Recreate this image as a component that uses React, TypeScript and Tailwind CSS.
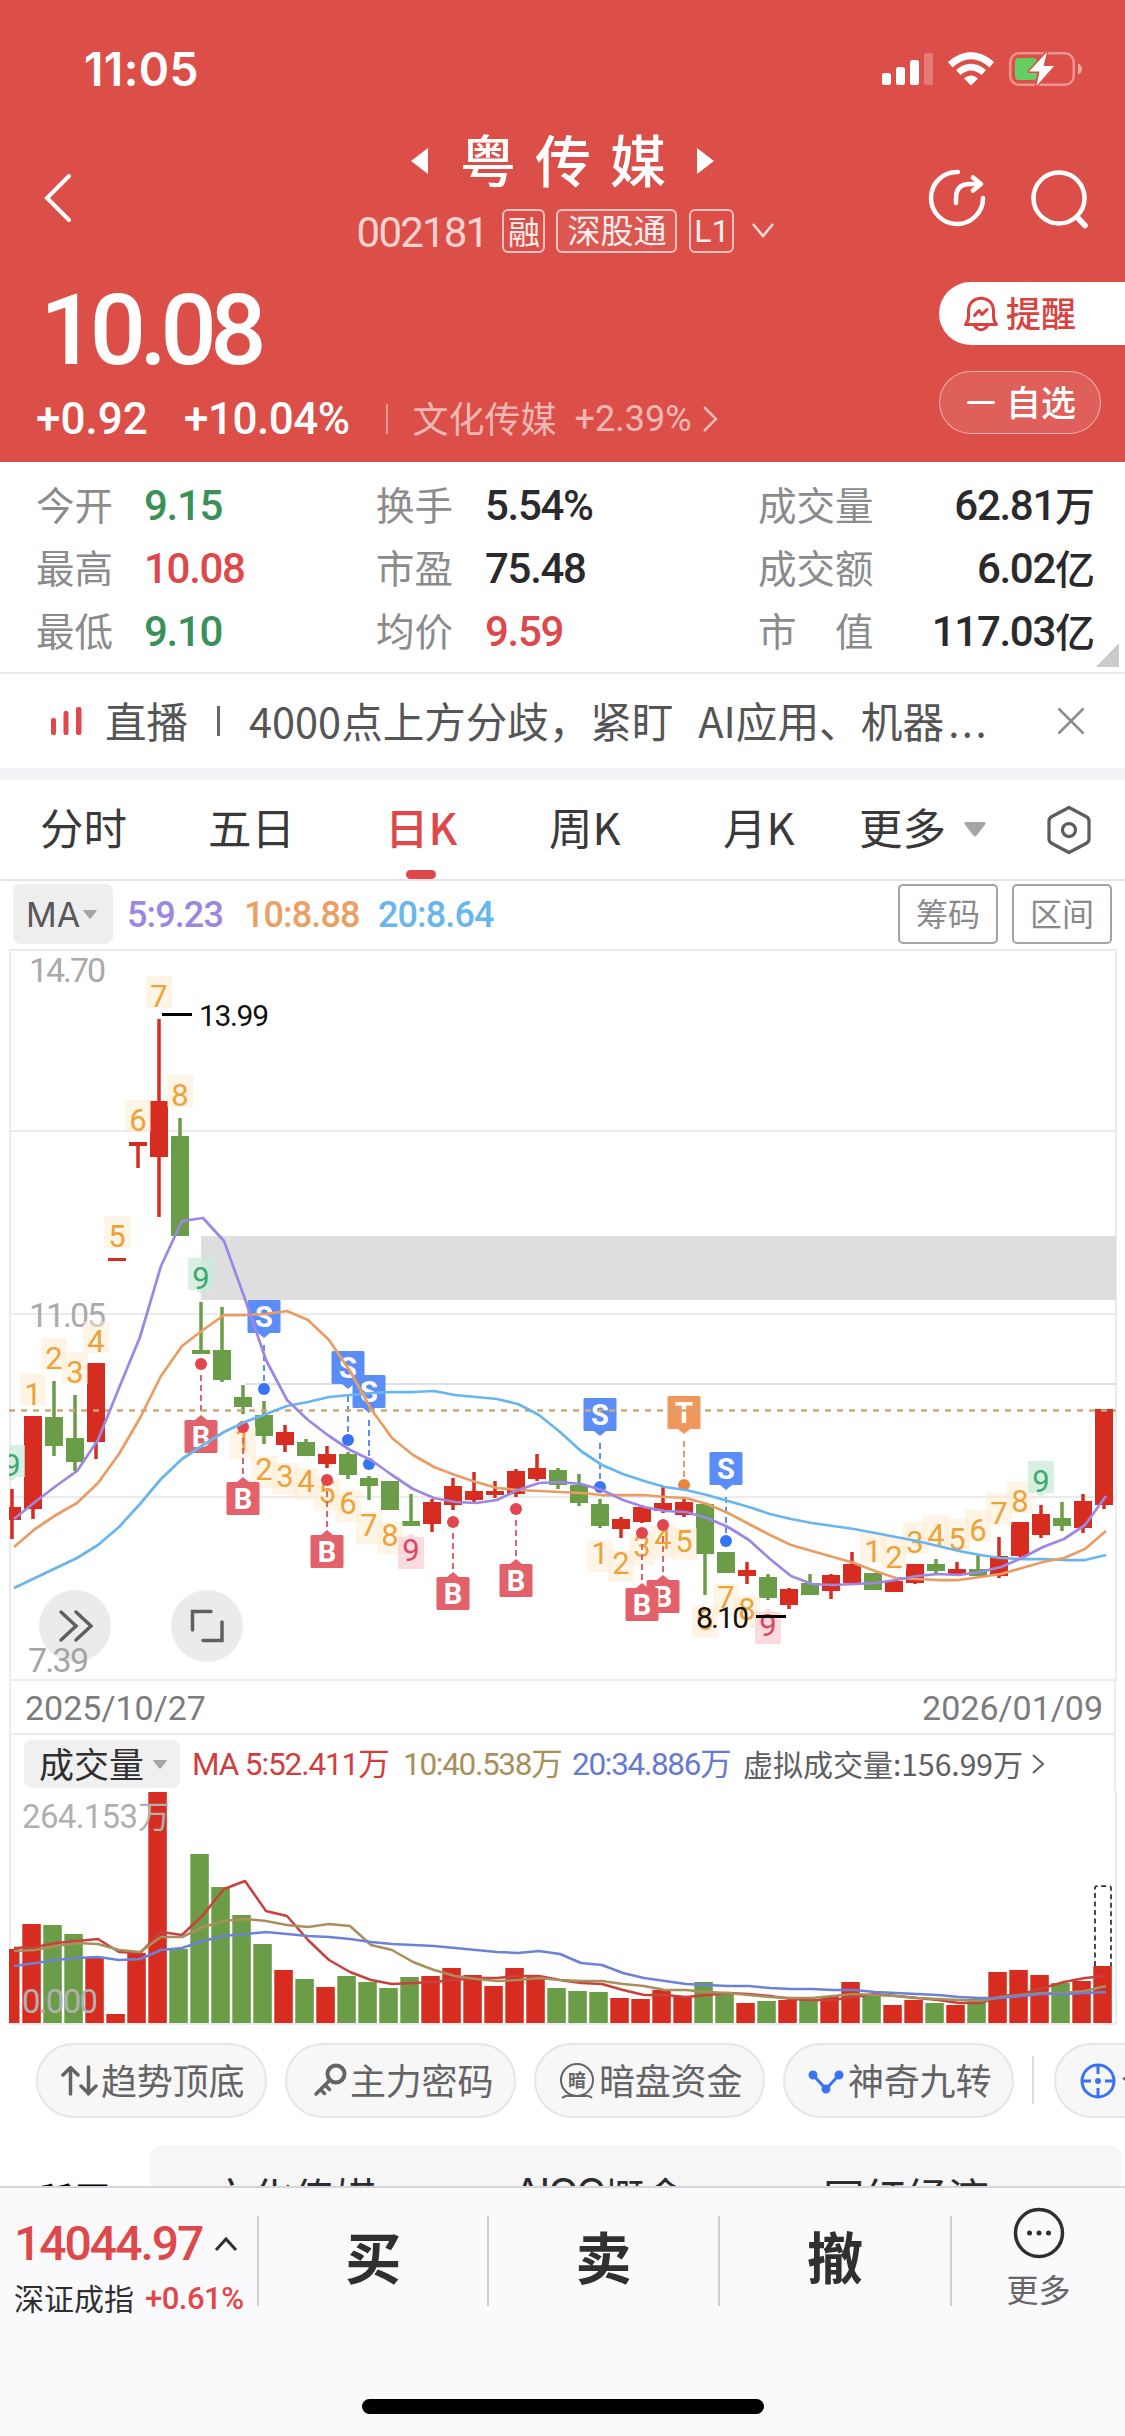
import type { ReactNode } from "react";

type Candle = [dir: "r" | "g", top: number, bottom: number, high: number, low: number];
type Turn = [x: number, baseline: number, n: number, tone?: "green" | "pink"];
type Mark = [kind: "B" | "S" | "T", x: number, boxTop: number, dotY: number];

const RED = "#d72d20";
const GREEN = "#6b9d48";
const STEP = 21;

const CANDLES: Candle[] = [
  ["r", 1507, 1520, 1489, 1539], ["r", 1416, 1509, 1416, 1519], ["g", 1417, 1446, 1381, 1456],
  ["g", 1438, 1462, 1395, 1471], ["r", 1363, 1442, 1363, 1459], ["r", 1258, 1261, 1258, 1261],
  ["r", 1142, 1146, 1142, 1168], ["r", 1101, 1157, 1019, 1217], ["g", 1136, 1236, 1118, 1236],
  ["g", 1350, 1354, 1302, 1354], ["g", 1350, 1380, 1307, 1382], ["g", 1397, 1407, 1385, 1414],
  ["g", 1415, 1436, 1401, 1444], ["r", 1432, 1445, 1425, 1452], ["g", 1442, 1456, 1439, 1456],
  ["r", 1454, 1464, 1446, 1468], ["g", 1454, 1475, 1452, 1479], ["g", 1478, 1486, 1476, 1500],
  ["g", 1481, 1510, 1481, 1510], ["g", 1521, 1526, 1494, 1526], ["r", 1502, 1524, 1499, 1532],
  ["r", 1486, 1505, 1478, 1510], ["r", 1491, 1500, 1472, 1502], ["r", 1491, 1495, 1481, 1498],
  ["r", 1471, 1494, 1469, 1497], ["r", 1468, 1479, 1454, 1481], ["g", 1470, 1485, 1468, 1489],
  ["g", 1485, 1503, 1474, 1506], ["g", 1504, 1526, 1499, 1528], ["r", 1519, 1529, 1517, 1538],
  ["r", 1507, 1522, 1505, 1523], ["r", 1503, 1511, 1487, 1513], ["r", 1502, 1515, 1499, 1517],
  ["g", 1504, 1554, 1504, 1595], ["g", 1552, 1573, 1552, 1573], ["r", 1570, 1576, 1562, 1584],
  ["g", 1577, 1598, 1574, 1600], ["r", 1589, 1605, 1588, 1609], ["g", 1583, 1595, 1574, 1595],
  ["r", 1575, 1591, 1574, 1599], ["r", 1564, 1583, 1552, 1583], ["g", 1573, 1590, 1573, 1590],
  ["r", 1581, 1592, 1581, 1592], ["r", 1564, 1583, 1564, 1584], ["g", 1564, 1571, 1559, 1574],
  ["r", 1569, 1575, 1562, 1575], ["g", 1569, 1576, 1554, 1576], ["r", 1556, 1576, 1537, 1578],
  ["r", 1522, 1556, 1522, 1557], ["r", 1514, 1535, 1505, 1538], ["g", 1518, 1526, 1502, 1531],
  ["r", 1501, 1528, 1494, 1533], ["r", 1409, 1505, 1409, 1509],
];

const MA5 = [
  1519, 1502, 1486, 1471, 1440, 1388, 1337, 1266, 1221, 1218, 1241, 1299, 1360, 1400, 1420, 1436, 1450, 1460,
  1475, 1489, 1498, 1502, 1503, 1500, 1490, 1483, 1482, 1484, 1490, 1500, 1507, 1511, 1512, 1518, 1527, 1540,
  1559, 1576, 1584, 1585, 1584, 1583, 1580, 1576, 1574, 1575, 1572, 1567, 1558, 1547, 1539, 1525, 1496,
];
const MA10 = [
  1547, 1529, 1515, 1503, 1483, 1454, 1418, 1376, 1346, 1330, 1315, 1315, 1314, 1311, 1320, 1340, 1371, 1409,
  1438, 1455, 1467, 1475, 1482, 1488, 1490, 1491, 1492, 1493, 1495, 1495, 1495, 1497, 1498, 1504, 1513, 1524,
  1535, 1545, 1551, 1557, 1563, 1571, 1578, 1579, 1580, 1580, 1577, 1574, 1568, 1562, 1558, 1549, 1531,
];
const MA20 = [
  1588, 1578, 1568, 1558, 1545, 1527, 1504, 1479, 1459, 1445, 1432, 1422, 1414, 1406, 1402, 1397, 1395, 1393,
  1392, 1392, 1391, 1395, 1397, 1399, 1404, 1415, 1432, 1451, 1465, 1474, 1481, 1487, 1490, 1495, 1501, 1507,
  1514, 1519, 1523, 1526, 1529, 1533, 1537, 1541, 1546, 1551, 1555, 1558, 1559, 1559, 1560, 1560, 1555,
];

const TURNS_ABOVE: Turn[] = [
  [12, 1476, 9, "green"], [33, 1405, 1], [54, 1369, 2], [75, 1383, 3], [96, 1352, 4], [117, 1247, 5],
  [138, 1131, 6], [159, 1007, 7], [180, 1106, 8], [201, 1289, 9, "green"],
  [873, 1562, 1], [894, 1568, 2], [915, 1553, 3], [936, 1546, 4], [957, 1550, 5], [978, 1541, 6],
  [999, 1524, 7], [1020, 1512, 8], [1041, 1492, 9, "green"],
];
const TURNS_BELOW: Turn[] = [
  [243, 1451, 1], [264, 1480, 2], [285, 1487, 3], [306, 1492, 4], [327, 1503, 5], [348, 1514, 6],
  [369, 1536, 7], [390, 1546, 8], [411, 1561, 9, "pink"],
  [600, 1564, 1], [621, 1574, 2], [642, 1557, 3], [663, 1549, 4], [684, 1552, 5], [705, 1630, 6],
  [726, 1608, 7], [747, 1620, 8], [768, 1636, 9, "pink"],
];

const MARKS: Mark[] = [
  ["B", 201, 1420, 1364], ["S", 264, 1300, 1389], ["B", 243, 1482, 1427], ["B", 327, 1535, 1480],
  ["S", 348, 1351, 1440], ["S", 369, 1375, 1464], ["B", 453, 1577, 1522], ["B", 516, 1564, 1509],
  ["S", 600, 1398, 1487], ["B", 663, 1580, 1525], ["B", 642, 1588, 1533], ["T", 684, 1396, 1485],
  ["S", 726, 1452, 1541],
];
const MARK_COLORS = {
  B: ["#e2616a", "#e2454d"],
  S: ["#5b8df9", "#3574f3"],
  T: ["#f0975c", "#ef8338"],
};

// heights are measured up from the zero line
const VOLUMES = [
  74, 99, 98, 89, 65, 9, 70, 231, 74, 169, 136, 108, 79, 53, 44, 36, 47, 41, 35, 46, 47, 55, 48, 37, 55, 46, 35,
  32, 31, 25, 24, 33, 27, 41, 29, 20, 22, 23, 24, 27, 41, 28, 18, 23, 20, 18, 24, 51, 53, 48, 40, 42, 57,
];
const VMA5 = [
  75, 76, 80, 82, 84, 71, 70, 91, 88, 108, 134, 142, 112, 107, 83, 63, 51, 43, 39, 40, 41, 43, 45, 45, 47, 47, 43,
  40, 39, 33, 28, 28, 26, 28, 30, 29, 27, 24, 23, 23, 26, 29, 27, 25, 23, 20, 20, 27, 29, 35, 41, 45, 47,
];
const VMA10 = [
  72, 73, 77, 80, 79, 73, 71, 86, 86, 96, 102, 104, 102, 98, 96, 99, 97, 78, 73, 61, 53, 47, 44, 42, 43, 45, 43,
  42, 42, 39, 37, 33, 33, 31, 30, 28, 26, 25, 25, 27, 29, 28, 27, 25, 24, 23, 22, 26, 28, 30, 30, 32, 37,
];
const VMA20 = [
  57, 60, 63, 65, 66, 63, 64, 73, 75, 82, 87, 89, 91, 89, 87, 86, 84, 81, 79, 78, 77, 75, 73, 71, 70, 72, 69,
  60, 58, 50, 45, 42, 39, 38, 37, 37, 35, 34, 34, 33, 33, 31, 30, 29, 28, 26, 25, 25, 27, 29, 29, 30, 31,
];

const linePoints = (ys: number[]) => ys.map((y, i) => `${14 + STEP * i},${y}`).join(" ");
const volPoints = (hs: number[]) => hs.map((h, i) => `${14 + STEP * i},${2023 - h}`).join(" ");

function TurnLabel({ item, below }: { item: Turn; below?: boolean }) {
  const [x, y, n, tone] = item;
  const top = below ? y - 24 : y - 31;
  const fill = tone === "green" ? "#c9ebd8" : tone === "pink" ? "#f9cfd3" : "#fdebcf";
  const color = tone === "green" ? "#3fa872" : tone === "pink" ? "#dc4660" : "#eda23a";
  return (
    <g>
      <rect x={x - 13} y={top} width="26" height="32" fill={fill} opacity={tone ? 0.75 : 0.5} />
      {tone && (
        <path
          d={below ? `M${x - 5} ${top}l5 -4l5 4z` : `M${x - 5} ${top + 32}l5 4l5 -4z`}
          fill={fill}
          opacity="0.75"
        />
      )}
      <text x={x} y={y} fill={color} fontSize="31" textAnchor="middle">{n}</text>
    </g>
  );
}

function TradeMark({ item }: { item: Mark }) {
  const [kind, x, top, dot] = item;
  const [fill, dotFill] = MARK_COLORS[kind];
  const up = kind === "B";
  return (
    <g>
      <line
        x1={x} x2={x}
        y1={up ? dot + 11 : top + 45}
        y2={up ? top - 5 : dot - 6}
        stroke={fill} strokeWidth="2" strokeDasharray="6 4"
      />
      <circle cx={x} cy={dot} r="6" fill={dotFill} />
      <rect x={x - 16.5} y={top} width="33" height="33" rx="1.5" fill={fill} />
      <path d={up ? `M${x - 6} ${top}l6 -5l6 5z` : `M${x - 6} ${top + 33}l6 5l6 -5z`} fill={fill} />
      <text x={x} y={top + 27} fill="#fff" fontSize="29" fontWeight="700" textAnchor="middle">{kind}</text>
    </g>
  );
}

function PriceChart() {
  return (
    <svg className="block font-['Roboto',sans-serif]" width="1125" height="732" viewBox="0 949 1125 732">
      <defs>
        <clipPath id="plot"><rect x="9" y="949" width="1107" height="732" /></clipPath>
      </defs>
      <g stroke="#ebebee" strokeWidth="2" fill="none">
        <path d="M10 1681V950H1116V1681M10 1131H1116M10 1314H1116M10 1497H1116M10 1680H1116" />
        <path d="M245 1384H1116" stroke="#e0e0e2" />
      </g>
      <rect x="201" y="1236" width="915" height="64" fill="#dedede" />
      <g fill="#aaa" fontSize="34">
        <text x="29" y="982" textLength="77">14.70</text>
        <text x="29" y="1327" textLength="77">11.05</text>
      </g>
      <circle cx="75" cy="1626" r="36" fill="#ebebeb" />
      <circle cx="207" cy="1626" r="36" fill="#ebebeb" />
      <path
        d="M61 1612L76 1626L61 1640M76 1612L91 1626L76 1640M192.500 1630V1611.500H211M222 1622V1640.500H203"
        fill="none" stroke="#606060" strokeWidth="3.500" strokeLinecap="round"
      />
      <text x="28" y="1672" fill="#a4a4a4" fontSize="34" textLength="61">7.39</text>

      <g clipPath="url(#plot)">
        {CANDLES.map(([dir, top, bottom, high, low], i) => {
          const x = 12 + STEP * i;
          return (
            <g key={i} fill={dir === "r" ? RED : GREEN}>
              <rect x={x - 1.75} y={high} width="3.5" height={low - high} />
              <rect x={x - 9} y={top} width="18" height={bottom - top} />
            </g>
          );
        })}
        {TURNS_ABOVE.map((t) => <TurnLabel key={t[0]} item={t} />)}
        {TURNS_BELOW.map((t) => <TurnLabel key={t[0]} item={t} below />)}
      </g>
      {MARKS.map((m) => <TradeMark key={m[1]} item={m} />)}

      <line x1="9" x2="1116" y1="1410.500" y2="1410.500" stroke="#cba878" strokeWidth="2.500" strokeDasharray="6 6" />
      <g fill="none" strokeWidth="2.750" strokeLinejoin="round">
        <polyline points={linePoints(MA20)} stroke="#69b5ee" />
        <polyline points={linePoints(MA10)} stroke="#ea9d63" />
        <polyline points={linePoints(MA5)} stroke="#9d87e4" />
      </g>
      <path d="M162 1014.500H192M756 1616.500H786" stroke="#000" strokeWidth="3" />
      <g fill="#111" fontSize="30">
        <text x="199" y="1026" textLength="70">13.99</text>
        <text x="696" y="1628" textLength="53">8.10</text>
      </g>
    </svg>
  );
}

function VolumeChart() {
  return (
    <svg
      className="block font-['Roboto','Noto_Sans_CJK_SC',sans-serif]"
      width="1125" height="234" viewBox="0 1791 1125 234"
    >
      <path d="M10 1791V2024M1116 1791V2024M10 2024H1116" stroke="#ebebee" strokeWidth="2" />
      {VOLUMES.map((h, i) => {
        const x = i === 0 ? 9 : 1.3 + STEP * i;
        return (
          <rect
            key={i} x={x} y={2023 - h} width={i === 0 ? 10.5 : 18.5} height={h}
            fill={i === 12 || CANDLES[i][0] === "g" ? GREEN : RED}
          />
        );
      })}
      <path d="M1095 1966V1888Q1095 1886 1097 1886H1109Q1111 1886 1111 1888V1966" fill="none" stroke="#333" strokeWidth="1.750" strokeDasharray="5 3.500" />
      <g fill="none" strokeWidth="2.500" strokeLinejoin="round">
        <polyline points={volPoints(VMA5)} stroke="#c9413c" />
        <polyline points={volPoints(VMA10)} stroke="#a98f5c" />
        <polyline points={volPoints(VMA20)} stroke="#6c82d6" />
      </g>
      <g fill="#b0b0b0" fontSize="33">
        <text x="22" y="1828" textLength="116">264.153</text>
        <text x="138" y="1828" fontSize="32">万</text>
        <text x="22" y="2013" textLength="76">0.000</text>
      </g>
    </svg>
  );
}

function StatusBar() {
  return (
    <div className="flex h-[138px] items-center justify-between pr-[42px] pl-[84px]">
      <span className="font-['Inter',sans-serif] text-[46px] font-semibold tracking-[0.4px]">11:05</span>
      <svg width="202" height="36" viewBox="881 51 202 36" fill="#fff">
        <rect x="882" y="73" width="9" height="12" rx="2.500" />
        <rect x="896" y="67" width="9" height="18" rx="2.500" />
        <rect x="910" y="60" width="9" height="25" rx="2.500" />
        <rect x="924" y="53" width="9" height="32" rx="2.500" opacity="0.25" />
        <path d="M948 62Q971 42 994 62L989.500 67.500Q971 51 952.500 67.500Z" />
        <path d="M956 70Q971 57.500 986 70L981.500 75Q971 66 960.500 75Z" />
        <path d="M964 78.500Q971 72.500 978 78.500L971 85.500Z" />
        <rect x="1010.250" y="53.250" width="63.500" height="31.500" rx="9" fill="none" stroke="#fff" strokeOpacity="0.4" strokeWidth="2.500" />
        <path d="M1078 63.500Q1082 65 1082 69T1078 74.500Z" opacity="0.5" />
        <rect x="1015" y="58" width="22" height="22" rx="4" fill="#65cf63" />
        <path
          d="M1047 52L1029 71.500H1039.500L1036.500 86L1054 66H1043.500Z"
          stroke="#dc4f48" strokeWidth="3" strokeLinejoin="round" paintOrder="stroke"
        />
      </svg>
    </div>
  );
}

function Header() {
  return (
    <header className="h-[462px] bg-[#dc4f48] text-white">
      <StatusBar />
      <div className="flex h-[120px] justify-between">
        <div className="flex w-[230px] items-center pl-[43px]">
          <svg width="30" height="52" viewBox="0 0 30 52" fill="none" stroke="currentColor" strokeWidth="4" strokeLinecap="round">
            <path d="M26 4L4 26L26 48" />
          </svg>
        </div>
        <div className="flex flex-col items-center">
          <div className="flex h-[46px] items-center">
            <svg width="19" height="28" viewBox="0 0 19 28" fill="currentColor"><path d="M18 1V27L1 14Z" /></svg>
            <span className="mr-[11px] ml-[31px] pb-[6px] text-[56px] leading-[46px] font-medium tracking-[19px]">粤传媒</span>
            <svg width="19" height="28" viewBox="0 0 19 28" fill="currentColor"><path d="M1 1V27L18 14Z" /></svg>
          </div>
          <div className="mt-[25px] flex h-11 items-center pl-2">
            <span className="mr-[15px] pt-1 font-['Roboto',sans-serif] text-[42px] leading-10 tracking-[-1.8px] text-white/75">002181</span>
            <span className="flex h-11 w-[43px] items-center justify-center rounded-[6px] border-2 border-white/65 pb-[3px] text-[32px] leading-none text-white/90">融</span>
            <span className="ml-[11px] flex h-11 w-[121px] items-center justify-center rounded-[6px] border-2 border-white/65 bg-white/5 pb-[3px] text-[33px] leading-none text-white/90">深股通</span>
            <span className="ml-3 flex h-11 w-[45px] items-center justify-center rounded-[6px] border-2 border-white/65 font-['Roboto',sans-serif] text-[32px] leading-none text-white/90">L1</span>
            <svg className="ml-4" width="26" height="20" viewBox="0 0 26 20" fill="none" stroke="currentColor" strokeWidth="2.500"><path d="M3 3L13 15L23 3" opacity="0.8" /></svg>
          </div>
        </div>
        <div className="flex w-[230px] items-center">
          <svg className="ml-[30px]" width="64" height="64" viewBox="0 0 64 64" fill="none" stroke="currentColor" strokeWidth="4.500" strokeLinecap="round">
            <path d="M33 6A26 26 0 1 0 58 32" />
            <path d="M31 37V32Q31 18 45 18H53" />
            <path d="M48 11.500L56 18L48 24.500" strokeLinejoin="round" />
          </svg>
          <svg className="ml-[38px]" width="64" height="64" viewBox="0 0 64 64" fill="none" stroke="currentColor" strokeWidth="4.500" strokeLinecap="round">
            <circle cx="32" cy="32" r="25.500" />
            <path d="M50 51L58 59.500" strokeWidth="5.500" />
          </svg>
        </div>
      </div>
      <div className="flex justify-between">
        <div className="pt-[37px] pl-[36px]">
          <div className="flex h-[70px] items-center pl-1 font-['Roboto',sans-serif] text-[99px] leading-[70px] font-medium tracking-[-6.5px]">10.08</div>
          <div className="mt-8 flex h-11 items-center whitespace-nowrap">
            <span className="w-[148px] font-['Roboto',sans-serif] text-[44px] font-medium">+0.92</span>
            <span className="font-['Roboto',sans-serif] text-[44px] font-medium tracking-[-0.5px]">+10.04%</span>
            <span className="ml-[36px] h-[30px] w-[2px] bg-white/40" />
            <span className="ml-[25px] pb-1 text-[36px] text-white/60">文化传媒</span>
            <span className="ml-[18px] font-['Roboto',sans-serif] text-[36px] text-white/60">+2.39%</span>
            <svg className="ml-[9px]" width="18" height="30" viewBox="0 0 18 30" fill="none" stroke="#fff" strokeOpacity="0.6" strokeWidth="2.500"><path d="M3 3L15 15L3 27" /></svg>
          </div>
        </div>
        <div className="flex w-[186px] flex-col pt-6">
          <div className="flex h-[63px] items-center rounded-l-full bg-white pl-6 text-[#d9433f]">
            <svg width="36" height="38" viewBox="0 0 36 38" fill="none" stroke="currentColor" strokeWidth="3" strokeLinejoin="round" strokeLinecap="round">
              <path d="M2.500 29.500Q5.500 26 5.500 21V16C5.500 -1 30.500 -1 30.500 16V21Q30.500 26 33.500 29.500Z" />
              <path d="M12 31.500Q18 38 24 31.500" />
              <path d="M11.500 20.500L16 15.500L19 19.500L24 14.500" />
            </svg>
            <span className="ml-[7px] pb-1 text-[35px] leading-none font-medium">提醒</span>
          </div>
          <div className="mt-[26px] flex h-[63px] w-[162px] items-center rounded-full border-[1.5px] border-white/50 bg-white/10">
            <span className="ml-[27px] h-[3.5px] w-7 rounded-full bg-white" />
            <span className="ml-[11px] pb-1 text-[35px] leading-none font-medium">自选</span>
          </div>
        </div>
      </div>
    </header>
  );
}

const STATS = [
  ["今开", "9.15", "text-[#3a9059]", "换手", "5.54%", "text-[#2a2a2c]", "成交量", "62.81", "万"],
  ["最高", "10.08", "text-[#df484b]", "市盈", "75.48", "text-[#2a2a2c]", "成交额", "6.02", "亿"],
  ["最低", "9.10", "text-[#3a9059]", "均价", "9.59", "text-[#df484b]", "市　值", "117.03", "亿"],
];

function Stats() {
  const num = "font-['Roboto',sans-serif] text-[42px] font-medium tracking-[-1.3px]";
  const label = "pb-[6px] text-[38.5px] leading-[56px]";
  return (
    <section className="relative h-[212px] border-b-2 border-[#e8e8ea] pt-3">
      {STATS.map(([a, av, ac, b, bv, bc, c, cv, unit]) => (
        <div key={a} className="flex h-[63px] items-center pr-[30px] pl-[36px] whitespace-nowrap text-[#8b8b8d]">
          <span className={`${label} w-[108px]`}>{a}</span>
          <span className={`${num} w-[232px] ${ac}`}>{av}</span>
          <span className={`${label} w-[109px]`}>{b}</span>
          <span className={`${num} w-[273px] ${bc}`}>{bv}</span>
          <span className={label}>{c}</span>
          <span className={`${num} ml-auto text-[#2a2a2c]`}>{cv}</span>
          <span className="pb-[3px] text-[40px] leading-[56px] font-medium text-[#2a2a2c]">{unit}</span>
        </div>
      ))}
      <svg className="absolute right-[6px] bottom-[5px]" width="23" height="24" viewBox="0 0 23 24" fill="#cbcbcb"><path d="M23 0V24H0Z" /></svg>
    </section>
  );
}

function LiveBanner() {
  return (
    <div className="flex h-[94px] items-center pl-[51px] whitespace-nowrap text-[#555]">
      <svg width="32" height="30" viewBox="0 0 32 30" fill="#e0484b">
        <rect y="12" width="5" height="17" rx="2" />
        <rect x="12.500" y="5" width="5" height="24" rx="2" />
        <rect x="25" y="1" width="5.500" height="28" rx="2" />
      </svg>
      <span className="ml-[22px] pb-[2px] text-[41.5px]">直播</span>
      <span className="ml-[29px] h-[30px] w-[3px] bg-[#666]" />
      <span className="ml-[29px] pb-[2px] text-[41.5px]">4000点上方分歧，</span>
      <span className="pb-[2px] text-[41.5px]">紧盯</span>
      <span className="ml-[25px] pb-[2px] text-[41.7px]">AI应用、机器</span>
      <span className="ml-1 pb-[2px] text-[40px] tracking-[2.5px]">...</span>
      <svg className="mr-[40px] ml-auto" width="28" height="28" viewBox="0 0 28 28" stroke="#8c8c8e" strokeWidth="2.500"><path d="M1.500 1.500L26.500 26.500M26.500 1.500L1.500 26.500" /></svg>
    </div>
  );
}

function Caret({ className, w = 14, h = 9 }: { className?: string; w?: number; h?: number }) {
  return (
    <svg className={className} width={w} height={h} viewBox="0 0 20 14" preserveAspectRatio="none" fill="#a5a5a7">
      <path d="M1.500 0H18.500Q20.500 0.500 19 2.500L11.500 12.500Q10 14.500 8.500 12.500L1 2.500Q-0.500 0.500 1.500 0Z" />
    </svg>
  );
}

function PeriodTabs() {
  return (
    <nav className="flex h-[101px] items-center border-b-2 border-[#e4e4e6] pl-[40px] text-[43.5px] leading-[60px] whitespace-nowrap text-[#39393b]">
      <span className="w-[168px] pb-[5px]">分时</span>
      <span className="w-[177px] pb-[5px]">五日</span>
      <span className="relative flex h-full w-[164px] items-center pb-[5px] font-medium text-[#df484b]">
        日K
        <i className="absolute bottom-0 left-[21px] h-[9px] w-[30px] rounded-full bg-[#df484b]" />
      </span>
      <span className="w-[174px] pb-[5px]">周K</span>
      <span className="w-[136px] pb-[5px]">月K</span>
      <span className="pb-[5px]">更多</span>
      <Caret className="ml-[18px]" w={22} h={15} />
      <svg className="ml-[60px]" width="46" height="50" viewBox="0 0 46 50" fill="none" stroke="#5d5d5f" strokeWidth="3.250" strokeLinejoin="round">
        <path d="M23 2.500L40 11.500Q43 13 43 16V34Q43 37 40 38.500L23 47.500L6 38.500Q3 37 3 34V16Q3 13 6 11.500Z" />
        <circle cx="23" cy="25" r="6.500" />
      </svg>
    </nav>
  );
}

function MaRow() {
  return (
    <div className="flex h-[68px] items-start px-[13px] pt-[3px] whitespace-nowrap">
      <div className="flex h-[60px] w-[100px] items-center rounded-[8px] bg-[#eee] pl-[13px]">
        <span className="font-['Inter',sans-serif] text-[34px] text-[#58585a]">MA</span>
        <Caret className="ml-[3px]" w={14} h={9} />
      </div>
      <div className="flex h-[60px] items-center pt-[2px] font-['Roboto',sans-serif] text-[36px] font-medium tracking-[-0.9px]">
        <span className="ml-[14px] w-[117px] text-[#9b87e2]">5:9.23</span>
        <span className="w-[134px] text-[#eb9f63]">10:8.88</span>
        <span className="text-[#69b5ee]">20:8.64</span>
      </div>
      <div className="ml-auto flex gap-[14px] text-[32px] leading-none text-[#8a8a8c]">
        <span className="flex h-[60px] w-[100px] items-center justify-center rounded-[5px] border-2 border-[#a2a2a4] pb-1">筹码</span>
        <span className="flex h-[60px] w-[100px] items-center justify-center rounded-[5px] border-2 border-[#a2a2a4] pb-1">区间</span>
      </div>
    </div>
  );
}

function VolumeHeader() {
  return (
    <div className="mx-[9px] flex h-14 items-start border-x-2 border-[#ebebee] pt-[5px] whitespace-nowrap">
      <div className="ml-[13px] flex h-12 w-[156px] items-center rounded-[8px] bg-[#f0f0f0] pl-[15px] text-[35px] leading-none text-[#2f2f31]">
        <span className="pb-1">成交量</span>
        <Caret className="ml-[9px]" w={14} h={9} />
      </div>
      <div className="flex h-[50px] items-center font-['Roboto','Noto_Sans_CJK_SC',sans-serif] text-[31.5px] tracking-[-1.1px]">
        <span className="ml-3 w-[211px] text-[#cf3f3f]">MA 5:52.411万</span>
        <span className="w-[169px] tracking-[-1.3px] text-[#a98f5c]">10:40.538万</span>
        <span className="w-[171px] tracking-[-1.3px] text-[#667ad0]">20:34.886万</span>
      </div>
      <span className="flex h-[50px] items-center pb-[3px] text-[30px] text-[#606062]">虚拟成交量:156.99万</span>
      <svg className="mt-[13px] ml-2" width="14" height="22" viewBox="0 0 14 22" fill="none" stroke="#606062" strokeWidth="2"><path d="M2 2L12 11L2 20" /></svg>
    </div>
  );
}

function Chip({ icon, label }: { icon: ReactNode; label: string }) {
  return (
    <div className="flex h-[75px] w-[231px] shrink-0 items-center rounded-full border-2 border-[#e6e6e7] bg-[#f7f7f7] pl-[22px] text-[36px] leading-none whitespace-nowrap text-[#646466]">
      {icon}
      <span className="ml-[3px] pb-1 tracking-[-0.2px]">{label}</span>
    </div>
  );
}

function IndicatorChips() {
  return (
    <div className="flex h-[120px] w-full items-start gap-[18px] overflow-hidden pt-[18px] pl-9">
      <Chip
        label="趋势顶底"
        icon={
          <svg width="38" height="36" viewBox="0 0 38 36" fill="none" stroke="#646466" strokeWidth="3.500" strokeLinecap="round" strokeLinejoin="round">
            <path d="M10.500 31V4.500M3 12L10.500 4.500L18 12M28.500 4V31M21 23L28.500 30.500L36 23" />
          </svg>
        }
      />
      <Chip
        label="主力密码"
        icon={
          <svg width="38" height="36" viewBox="0 0 38 36" fill="none" stroke="#646466" strokeWidth="3.500" strokeLinecap="round">
            <circle cx="27" cy="11" r="8.500" strokeWidth="4" />
            <path d="M21 17L7 31M11.500 26.500L15.500 30.500M16 22L20.500 26.500" />
          </svg>
        }
      />
      <Chip
        label="暗盘资金"
        icon={
          <svg width="38" height="38" viewBox="0 0 38 38" fill="none" stroke="#646466" strokeWidth="2">
            <circle cx="19" cy="18" r="16" />
            <path d="M4 36Q8 33 12 34H27Q31 33 34 36" />
            <text x="19" y="25" fontSize="18" fontWeight="700" textAnchor="middle" fill="#646466" stroke="none">暗</text>
          </svg>
        }
      />
      <Chip
        label="神奇九转"
        icon={
          <svg width="38" height="36" viewBox="0 0 38 36" fill="#3b72f4" stroke="#3b72f4" strokeWidth="3">
            <path d="M6 12L19 26L32 12" fill="none" />
            <circle cx="6" cy="12" r="3" />
            <circle cx="19" cy="26" r="3" />
            <circle cx="32" cy="12" r="3" />
          </svg>
        }
      />
      <div className="mt-[13px] mr-[2px] h-12 w-[2px] shrink-0 bg-[#dcdcde]" />
      <Chip
        label="个股诊断"
        icon={
          <svg width="40" height="40" viewBox="0 0 40 40" fill="none" stroke="#3b72f4" strokeWidth="3">
            <circle cx="20" cy="20" r="16" />
            <path d="M20 4V13M20 27V36M4 20H13M27 20H36" />
            <circle cx="20" cy="20" r="3" fill="#3b72f4" stroke="none" />
          </svg>
        }
      />
    </div>
  );
}

function SectorStrip() {
  return (
    <div className="flex h-[41px] items-start overflow-hidden whitespace-nowrap">
      <span className="mt-[33px] w-[150px] pl-[35px] text-[38px] leading-[42px] font-bold text-black">所属</span>
      <div className="flex h-[90px] w-[972px] rounded-t-[12px] bg-[#f6f6f6] pt-[28px] pl-[60px] text-[41.5px] leading-[46px] text-[#2c2c2e]">
        <span className="w-[304px]">文化传媒</span>
        <span className="flex w-[309px]">
          <span className="-mt-[3px] font-['Inter',sans-serif] text-[40px] tracking-[-2px]">AIGC</span>
          概念
        </span>
        <span>网红经济</span>
      </div>
    </div>
  );
}

function BottomBar() {
  return (
    <footer className="h-[250px] border-t-2 border-[#d6d6d9] bg-[#fafafc]">
      <div className="flex pt-7">
        <div className="h-[90px] w-[257px] pl-[14px] whitespace-nowrap">
          <div className="flex h-[56px] items-center">
            <span className="font-['Roboto',sans-serif] text-[48px] leading-[56px] font-medium tracking-[-2px] text-[#df484b]">14044.97</span>
            <svg className="ml-3" width="24" height="16" viewBox="0 0 24 16" fill="none" stroke="#2f2f31" strokeWidth="3"><path d="M2 14L12 3L22 14" /></svg>
          </div>
          <div className="flex h-[54px] items-center">
            <span className="pb-[3px] text-[30px] text-[#2f2f31]">深证成指</span>
            <span className="ml-[11px] font-['Roboto',sans-serif] text-[31px] font-medium tracking-[-0.5px] text-[#df484b]">+0.61%</span>
          </div>
        </div>
        <div className="flex h-[90px] divide-x-2 divide-[#d0d0d3] border-x-2 border-[#d0d0d3] text-[56px] leading-[77px] font-bold text-[#303032]">
          {["买", "卖", "撤"].map((t) => (
            <span key={t} className="flex w-[230.4px] items-start justify-center">{t}</span>
          ))}
        </div>
        <div className="-mt-[9px] flex flex-1 flex-col items-center">
          <svg width="52" height="52" viewBox="0 0 52 52" fill="#2f2f31">
            <circle cx="26" cy="26" r="23.500" fill="none" stroke="#2f2f31" strokeWidth="3.500" />
            <circle cx="16.500" cy="26" r="2.500" />
            <circle cx="26" cy="26" r="2.500" />
            <circle cx="35.500" cy="26" r="2.500" />
          </svg>
          <span className="mt-[9px] text-[32px] leading-[40px] text-[#666668]">更多</span>
        </div>
      </div>
      <div className="mx-auto mt-[91px] h-[15px] w-[402px] rounded-full bg-black" />
    </footer>
  );
}

export default function App() {
  return (
    <main className="h-[2436px] w-[1125px] overflow-hidden bg-white font-['Noto_Sans_CJK_SC',sans-serif]">
      <Header />
      <Stats />
      <LiveBanner />
      <div className="h-3 bg-[#f1f3f7]" />
      <PeriodTabs />
      <MaRow />
      <PriceChart />
      <div className="mx-[9px] flex h-[54px] items-center justify-between border-x-2 border-b-2 border-[#ebebee] pt-[2px] pr-[11px] pl-[14px] font-['Roboto',sans-serif] text-[34px] text-[#7c7c7e]">
        <span>2025/10/27</span>
        <span>2026/01/09</span>
      </div>
      <VolumeHeader />
      <VolumeChart />
      <IndicatorChips />
      <SectorStrip />
      <BottomBar />
    </main>
  );
}
